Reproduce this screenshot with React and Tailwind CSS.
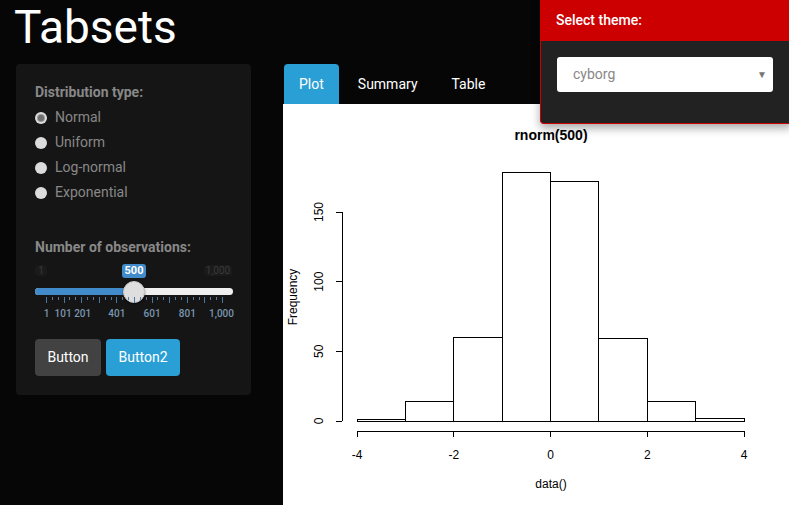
import React from "react";

const counts = [1, 14, 60, 178, 172, 59, 14, 2];

function Radio({ label, checked }) {
  return (
    <div className="flex h-[25px] items-center gap-[8px]">
      <span className="flex h-[12px] w-[12px] items-center justify-center rounded-full bg-[#dcdcdc]">
        {checked && <span className="h-[6px] w-[6px] rounded-full bg-[#6e6e6e] ring-1 ring-[#9a9a9a]" />}
      </span>
      <span className="text-[14px] text-[#888]">{label}</span>
    </div>
  );
}

function Slider() {
  const majors = Array.from({ length: 11 }, (_, i) => 11 + i * 17.6);
  const minors = [];
  for (let i = 0; i < 10; i++) {
    minors.push(11 + i * 17.6 + 5.87);
    minors.push(11 + i * 17.6 + 11.73);
  }
  const labels = [
    { t: "1", x: 11 },
    { t: "101", x: 27.6 },
    { t: "201", x: 47.2 },
    { t: "401", x: 81.4 },
    { t: "601", x: 116.6 },
    { t: "801", x: 151.8 },
    { t: "1,000", x: 186 },
  ];
  return (
    <div className="relative mt-[6px] h-[60px] w-[198px]">
      <span className="absolute left-0 top-[2px] flex h-[11px] w-[12px] items-center justify-center rounded-sm bg-[#1b1b1b] text-[10px] text-[#3a3a3a]">1</span>
      <span className="absolute left-[87px] top-[1px] flex h-[14px] w-[24px] items-center justify-center rounded-[3px] bg-[#428bca] text-[11px] font-bold text-white">500</span>
      <span className="absolute left-[169px] top-[2px] flex h-[11px] w-[28px] items-center justify-center rounded-sm bg-[#1b1b1b] text-[10px] text-[#3a3a3a]">1,000</span>
      <div className="absolute left-0 top-[25px] h-[7px] w-[198px] overflow-hidden rounded-full bg-[#efefef]">
        <div className="h-full w-[99px] bg-[#428bca]" />
      </div>
      <div className="absolute left-[88px] top-[18px] h-[22px] w-[22px] rounded-full border border-[#c8c8c8] bg-[#dedede] shadow-[0_1px_2px_rgba(0,0,0,0.5)]" />
      {majors.map((x, i) => (
        <span key={"M" + i} className="absolute top-[34px] h-[6px] w-px bg-[#4a78a3]" style={{ left: x }} />
      ))}
      {minors.map((x, i) => (
        <span key={"m" + i} className="absolute top-[34px] h-[3px] w-px bg-[#5d7b98]" style={{ left: x }} />
      ))}
      {labels.map((l) => (
        <span
          key={l.t}
          className="absolute top-[45px] -translate-x-1/2 text-[10px] font-medium leading-[12px] text-[#7a96b0]"
          style={{ left: l.x + 0.5 }}
        >
          {l.t}
        </span>
      ))}
    </div>
  );
}

function Plot() {
  const base = 421;
  const k = 1.3933;
  const x0 = 357;
  const u = 48.375;
  const font = "'Liberation Sans', Arial, sans-serif";
  return (
    <svg width="506" height="401" viewBox="283 104 506 401" className="block">
      <rect x="283" y="104" width="506" height="401" fill="#fff" />
      <text x="551" y="140" textAnchor="middle" fontFamily={font} fontSize="14" fontWeight="bold" fill="#000">
        rnorm(500)
      </text>
      {counts.map((c, i) => (
        <rect
          key={i}
          x={x0 + i * u}
          y={base - c * k}
          width={u}
          height={c * k}
          fill="none"
          stroke="#000"
          strokeWidth="1"
          shapeRendering="crispEdges"
        />
      ))}
      <line x1="342" y1="212" x2="342" y2="421" stroke="#000" shapeRendering="crispEdges" />
      {[0, 50, 100, 150].map((v) => {
        const y = base - v * k;
        return (
          <g key={v}>
            <line x1="336" y1={y} x2="342" y2={y} stroke="#000" shapeRendering="crispEdges" />
            <text
              transform={`translate(323 ${y}) rotate(-90)`}
              textAnchor="middle"
              fontFamily={font}
              fontSize="12"
              fill="#000"
            >
              {v}
            </text>
          </g>
        );
      })}
      <line x1="357" y1="431" x2="744" y2="431" stroke="#000" shapeRendering="crispEdges" />
      {[-4, -2, 0, 2, 4].map((v, i) => {
        const x = x0 + i * 2 * u;
        return (
          <g key={v}>
            <line x1={x} y1="431" x2={x} y2="437" stroke="#000" shapeRendering="crispEdges" />
            <text x={x} y="459" textAnchor="middle" fontFamily={font} fontSize="12" fill="#000">
              {v}
            </text>
          </g>
        );
      })}
      <text x="551" y="488" textAnchor="middle" fontFamily={font} fontSize="12" fill="#000">
        data()
      </text>
      <text
        transform="translate(297 297) rotate(-90)"
        textAnchor="middle"
        fontFamily={font}
        fontSize="12"
        fill="#000"
      >
        Frequency
      </text>
    </svg>
  );
}

export default function App() {
  return (
    <div className="relative h-[505px] w-[789px] overflow-hidden bg-[#060606] font-['Roboto',sans-serif]">
      <div className="h-[64px] pl-[14px] pt-[4px]">
        <h1 className="text-[46px] leading-none text-white">Tabsets</h1>
      </div>
      <div className="flex items-start">
        <div className="ml-[16px] flex w-[235px] flex-col rounded-[4px] bg-[#151515] px-[19px] pb-[19px] pt-[18px]">
          <div className="text-[14px] font-bold leading-[20px] text-[#888]">Distribution type:</div>
          <div className="mt-[3px]">
            <Radio label="Normal" checked />
            <Radio label="Uniform" />
            <Radio label="Log-normal" />
            <Radio label="Exponential" />
          </div>
          <div className="mt-[32px] text-[14px] font-bold leading-[20px] text-[#888]">Number of observations:</div>
          <Slider />
          <div className="mt-[16px] flex gap-[5px]">
            <button className="h-[37px] w-[66px] rounded-[4px] bg-[#424242] text-[14px] text-white">Button</button>
            <button className="h-[37px] w-[74px] rounded-[4px] bg-[#2a9fd6] text-[14px] text-white">Button2</button>
          </div>
        </div>
        <div className="ml-[32px] flex flex-1 flex-col">
          <div className="flex h-[40px] gap-[4px] pl-[1px]">
            <div className="flex items-center rounded-t-[4px] bg-[#2a9fd6] px-[15px] text-[14px] text-white">Plot</div>
            <div className="flex items-center px-[15px] text-[14px] text-white">Summary</div>
            <div className="flex items-center px-[15px] text-[14px] text-white">Table</div>
          </div>
          <Plot />
        </div>
      </div>

      <div className="absolute left-[540px] top-0 w-[252px] overflow-hidden rounded-b-[4px] border border-t-0 border-[#cc0000] bg-[#222] shadow-[0_4px_10px_rgba(0,0,0,0.35)]">
        <div className="flex h-[41px] items-center bg-[#cc0000] pl-[15px] text-[14px] font-medium text-white">Select theme:</div>
        <div className="px-[16px] pb-[31px] pt-[16px]">
          <div className="relative flex h-[35px] w-[216px] items-center rounded-[3px] bg-white pl-[16px] text-[14px] text-[#888]">
            cyborg
            <span className="absolute right-[6px] top-[10px] text-[10px] text-[#777]">▼</span>
          </div>
        </div>
      </div>
    </div>
  );
}
